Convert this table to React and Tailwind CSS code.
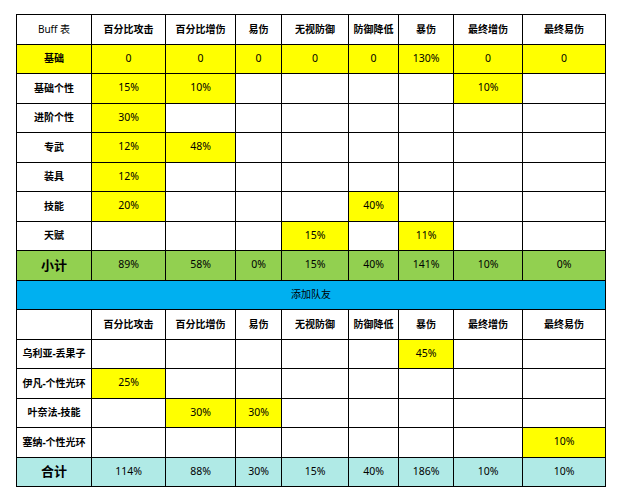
import React from "react";

const headers = ["百分比攻击", "百分比增伤", "易伤", "无视防御", "防御降低", "暴伤", "最终增伤", "最终易伤"];

const top = [
  { label: "基础", labelBg: "bg-[#ffff00]", cells: ["0", "0", "0", "0", "0", "130%", "0", "0"].map((t) => [t, true]) },
  { label: "基础个性", cells: [["15%", true], ["10%", true], null, null, null, null, ["10%", true], null] },
  { label: "进阶个性", cells: [["30%", true], null, null, null, null, null, null, null] },
  { label: "专武", cells: [["12%", true], ["48%", true], null, null, null, null, null, null] },
  { label: "装具", cells: [["12%", true], null, null, null, null, null, null, null] },
  { label: "技能", cells: [["20%", true], null, null, null, ["40%", true], null, null, null] },
  { label: "天赋", cells: [null, null, null, ["15%", true], null, ["11%", true], null, null] },
];

const members = [
  { label: "乌利亚-丢果子", cells: [null, null, null, null, null, ["45%", true], null, null] },
  { label: "伊凡-个性光环", cells: [["25%", true], null, null, null, null, null, null, null] },
  { label: "叶奈法-技能", cells: [null, ["30%", true], ["30%", true], null, null, null, null, null] },
  { label: "塞纳-个性光环", cells: [null, null, null, null, null, null, null, ["10%", true]] },
];

const subtotal = ["89%", "58%", "0%", "15%", "40%", "141%", "10%", "0%"];
const total = ["114%", "88%", "30%", "15%", "40%", "186%", "10%", "10%"];

function Cell({ children, className = "" }) {
  return (
    <div className={`flex items-center justify-center whitespace-nowrap ${className}`}>{children}</div>
  );
}

function HeaderRow({ first }) {
  return (
    <>
      <Cell className="bg-white">{first}</Cell>
      {headers.map((h, i) => (
        <Cell key={i} className="bg-white font-bold">{h}</Cell>
      ))}
    </>
  );
}

function DataRow({ row }) {
  return (
    <>
      <Cell className={`font-bold ${row.labelBg || "bg-white"}`}>{row.label}</Cell>
      {row.cells.map((c, i) => (
        <Cell key={i} className={`text-[10.5px] ${c && c[1] ? "bg-[#ffff00]" : "bg-white"}`}>
          {c ? c[0] : ""}
        </Cell>
      ))}
    </>
  );
}

function SumRow({ label, values, bg }) {
  return (
    <>
      <Cell className={`${bg} font-bold text-[13px]`}>{label}</Cell>
      {values.map((v, i) => (
        <Cell key={i} className={`${bg} text-[10.5px]`}>{v}</Cell>
      ))}
    </>
  );
}

export default function App() {
  return (
    <div
      className="min-h-[501px] w-[619px] bg-white pl-4 pt-[14px] text-[10px] text-black"
      style={{ fontFamily: '"Noto Sans", "Noto Sans CJK SC", sans-serif' }}
    >
      <div className="inline-block bg-black p-px">
        <div className="grid grid-cols-[74px_73px_69px_45px_66px_49px_54px_68px_82px] auto-rows-[28.5px] gap-px">
          <HeaderRow first="Buff 表" />
          {top.map((r, i) => (
            <DataRow key={i} row={r} />
          ))}
          <SumRow label="小计" values={subtotal} bg="bg-[#92d050]" />
          <Cell className="col-span-9 bg-[#00b0f0]">添加队友</Cell>
          <HeaderRow first="" />
          {members.map((r, i) => (
            <DataRow key={i} row={r} />
          ))}
          <SumRow label="合计" values={total} bg="bg-[#b0eae6]" />
        </div>
      </div>
    </div>
  );
}
